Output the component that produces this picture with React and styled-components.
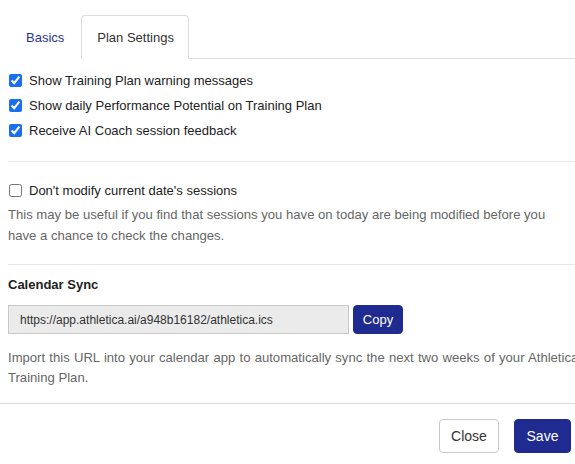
import styled, { createGlobalStyle } from "styled-components";

const Global = createGlobalStyle`
  html, body {
    margin: 0;
    padding: 0;
    background: #fff;
    font-family: "Liberation Sans", Arial, sans-serif;
    font-size: 13px;
    color: #222;
    overflow: hidden;
  }
`;

const Page = styled.div`
  width: 575px;
  overflow: hidden;
`;

const Body = styled.div`
  width: 620px;
  padding-left: 8px;
  box-sizing: border-box;
`;

const TabBar = styled.ul`
  display: flex;
  list-style: none;
  margin: 0;
  padding: 15px 0 0;
  border-bottom: 1px solid #dcdcdc;
`;

const Tab = styled.li`
  height: 44px;
  box-sizing: border-box;
  padding: ${(p) => (p.$active ? "0 14px 0 15px" : "0 16px 0 17px")};
  display: flex;
  align-items: center;
  margin-bottom: -1px;
  font-size: 13px;
  color: ${(p) => (p.$active ? "#333" : "#2a3593")};
  background: #fff;
  border: 1px solid ${(p) => (p.$active ? "#dcdcdc" : "transparent")};
  border-bottom-color: ${(p) => (p.$active ? "#fff" : "transparent")};
  border-radius: 4px 4px 0 0;
`;

const Section = styled.section`
  padding: ${(p) => p.$pad};
  border-bottom: ${(p) => (p.$last ? "none" : "1px solid #e8e8e8")};
`;

const Check = styled.label`
  display: flex;
  align-items: center;
  height: 25px;
  gap: 7px;
  color: #222;
`;

const Box = styled.input`
  width: 13px;
  height: 13px;
  margin: 0 0 0 1px;
  accent-color: #1a6ff0;
`;

const Note = styled.p`
  margin: ${(p) => p.$m || "0"};
  line-height: ${(p) => p.$lh || "21px"};
  font-size: 13.1px;
  color: #666;
  white-space: ${(p) => (p.$nowrap ? "nowrap" : "normal")};
  word-spacing: ${(p) => (p.$nowrap ? "0.6px" : "normal")};
  width: ${(p) => (p.$nowrap ? "auto" : "555px")};
`;

const Title = styled.h4`
  margin: 0;
  font-size: 13px;
  line-height: 20px;
  font-weight: bold;
  color: #222;
`;

const UrlRow = styled.div`
  display: flex;
  gap: 4px;
  margin: 10px 0 14px;
`;

const UrlInput = styled.input`
  width: 341px;
  height: 29px;
  box-sizing: border-box;
  border: 1px solid #c8c8c8;
  background: #ebebeb;
  padding: 0 11px;
  font-family: "Liberation Sans", Arial, sans-serif;
  font-size: 12px;
  color: #333;
  border-radius: 0;
  outline: none;
`;

const Button = styled.button`
  height: ${(p) => p.$h || "34px"};
  width: ${(p) => p.$w};
  box-sizing: border-box;
  border-radius: 4px;
  font-family: "Liberation Sans", Arial, sans-serif;
  font-size: ${(p) => p.$fs || "14px"};
  padding: 0;
  cursor: pointer;
  background: ${(p) => (p.$primary ? "#1f2b90" : "#fff")};
  color: ${(p) => (p.$primary ? "#fff" : "#333")};
  border: 1px solid ${(p) => (p.$primary ? "#1f2b90" : "#c8c8c8")};
`;

const Footer = styled.footer`
  border-top: 1px solid #dcdcdc;
  display: flex;
  justify-content: flex-end;
  gap: 15px;
  padding: 15px 4px 0 0;
`;

export default function App() {
  return (
    <Page>
      <Global />
      <Body>
        <TabBar>
          <Tab>Basics</Tab>
          <Tab $active>Plan Settings</Tab>
        </TabBar>
        <Section $pad="9px 0 18px">
          <Check>
            <Box type="checkbox" defaultChecked />
            Show Training Plan warning messages
          </Check>
          <Check>
            <Box type="checkbox" defaultChecked />
            Show daily Performance Potential on Training Plan
          </Check>
          <Check>
            <Box type="checkbox" defaultChecked />
            Receive AI Coach session feedback
          </Check>
        </Section>
        <Section $pad="16px 0 18px">
          <Check>
            <Box type="checkbox" />
            Don't modify current date's sessions
          </Check>
          <Note $m="1px 0 0">
            This may be useful if you find that sessions you have on today are
            being modified before you have a chance to check the changes.
          </Note>
        </Section>
        <Section $pad="10px 0 15px" $last>
          <Title>Calendar Sync</Title>
          <UrlRow>
            <UrlInput readOnly value="https://app.athletica.ai/a948b16182/athletica.ics" />
            <Button $primary $w="50px" $h="29px" $fs="13px">
              Copy
            </Button>
          </UrlRow>
          <Note $lh="20px" $nowrap>
            Import this URL into your calendar app to automatically sync the next
            two weeks of your Athletica
          </Note>
          <Note $lh="20px">Training Plan.</Note>
        </Section>
      </Body>
      <Footer>
        <Button $w="60px">Close</Button>
        <Button $primary $w="57px">
          Save
        </Button>
      </Footer>
    </Page>
  );
}
